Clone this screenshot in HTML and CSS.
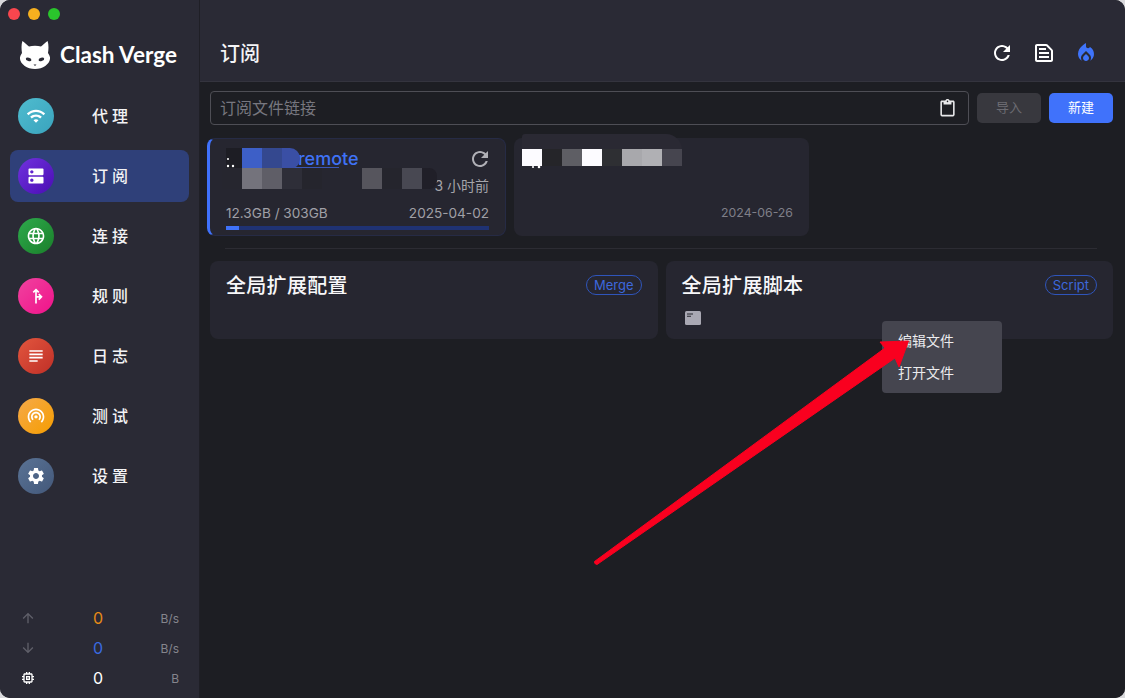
FILE: index.html
```html
<!DOCTYPE html>
<html lang="zh-CN">
<head>
<meta charset="utf-8">
<title>Clash Verge</title>
<link rel="stylesheet" href="styles.css">
</head>
<body>
<div class="window">
  <aside class="sidebar">
    <div class="traffic-lights"><i class="dot red"></i><i class="dot yellow"></i><i class="dot green"></i></div>
    <div class="logo">
      <svg class="cat" viewBox="0 0 30 28"><path fill="#fff" d="M2.4 0 C4.6 1.6 7 4 9 5.4 C12.5 4.6 17.5 4.6 21 5.4 C23 4 25.4 1.6 27.6 0 C28.8 3.5 28.6 8 28 12 C29.5 14 30.3 16 30 18 C29.5 23 23 28 15 28 C7 28 0.5 23 0 18 C-0.3 16 0.5 14 2 12 C1.4 8 1.2 3.5 2.4 0Z"/><ellipse cx="8.6" cy="18.4" rx="2.9" ry="1.6" transform="rotate(15 8.6 18.4)" fill="#2a2a35"/><ellipse cx="21.4" cy="18.4" rx="2.9" ry="1.6" transform="rotate(-15 21.4 18.4)" fill="#2a2a35"/><path fill="#2a2a35" d="M13.5 23.4 H16.5 L15 25Z"/></svg>
      <span class="logo-text">Clash Verge</span>
    </div>
    <nav class="nav">
      <a class="nav-item"><span class="nav-icon g-wifi"><svg viewBox="0 0 24 24"><path d="M1 9l2 2c4.97-4.97 13.03-4.97 18 0l2-2C16.93 2.93 7.08 2.93 1 9zm8 8l3 3 3-3c-1.65-1.66-4.34-1.66-6 0zm-4-4l2 2c2.76-2.76 7.24-2.76 10 0l2-2C15.14 9.14 8.87 9.14 5 13z"/></svg></span><span class="nav-label">代理</span></a>
      <a class="nav-item active"><span class="nav-icon g-dns"><svg viewBox="0 0 24 24"><path d="M20 13H4c-.55 0-1 .45-1 1v6c0 .55.45 1 1 1h16c.55 0 1-.45 1-1v-6c0-.55-.45-1-1-1zM7 19c-1.1 0-2-.9-2-2s.9-2 2-2 2 .9 2 2-.9 2-2 2zM20 3H4c-.55 0-1 .45-1 1v6c0 .55.45 1 1 1h16c.55 0 1-.45 1-1V4c0-.55-.45-1-1-1zM7 9c-1.1 0-2-.9-2-2s.9-2 2-2 2 .9 2 2-.9 2-2 2z"/></svg></span><span class="nav-label">订阅</span></a>
      <a class="nav-item"><span class="nav-icon g-globe"><svg viewBox="0 0 24 24"><path d="M11.99 2C6.47 2 2 6.48 2 12s4.47 10 9.99 10C17.52 22 22 17.52 22 12S17.52 2 11.99 2zm6.93 6h-2.95c-.32-1.25-.78-2.45-1.38-3.56 1.84.63 3.37 1.91 4.33 3.56zM12 4.04c.83 1.2 1.48 2.53 1.91 3.96h-3.82c.43-1.43 1.08-2.76 1.91-3.96zM4.26 14C4.1 13.36 4 12.69 4 12s.1-1.36.26-2h3.38c-.08.66-.14 1.32-.14 2 0 .68.06 1.34.14 2H4.26zm.82 2h2.95c.32 1.25.78 2.45 1.38 3.56-1.84-.63-3.37-1.9-4.33-3.56zm2.95-8H5.08c.96-1.66 2.49-2.93 4.33-3.56C8.81 5.55 8.35 6.75 8.03 8zM12 19.96c-.83-1.2-1.48-2.53-1.91-3.96h3.82c-.43 1.43-1.08 2.76-1.91 3.96zM14.34 14H9.66c-.09-.66-.16-1.32-.16-2 0-.68.07-1.35.16-2h4.68c.09.65.16 1.32.16 2 0 .68-.07 1.34-.16 2zm.25 5.56c.6-1.11 1.06-2.31 1.38-3.56h2.95c-.96 1.65-2.49 2.93-4.33 3.56zM16.36 14c.08-.66.14-1.32.14-2 0-.68-.06-1.34-.14-2h3.38c.16.64.26 1.31.26 2s-.1 1.36-.26 2h-3.38z"/></svg></span><span class="nav-label">连接</span></a>
      <a class="nav-item"><span class="nav-icon g-fork"><svg viewBox="0 0 24 24"><path d="M14.59 15.59 16 17l4-4-4-4-1.41 1.41L16.17 12H13V6.83l1.59 1.58L16 7l-4-4-4 4 1.41 1.41L11 6.83V21h2v-7h3.17l-1.58 1.59z"/></svg></span><span class="nav-label">规则</span></a>
      <a class="nav-item"><span class="nav-icon g-log"><svg viewBox="0 0 24 24"><path d="M14 17H4v2h10v-2zm6-8H4v2h16V9zM4 15h16v-2H4v2zM4 5v2h16V5H4z"/></svg></span><span class="nav-label">日志</span></a>
      <a class="nav-item"><span class="nav-icon g-test"><svg viewBox="0 0 24 24"><path d="M12 11c-1.1 0-2 .9-2 2 0 .55.23 1.05.59 1.41.36.36.86.59 1.41.59s1.05-.23 1.41-.59c.36-.36.59-.86.59-1.41 0-1.1-.9-2-2-2zm-6 2c0 1.66.68 3.15 1.76 4.24l1.42-1.42C8.45 15.1 8 14.11 8 13c0-2.21 1.79-4 4-4s4 1.79 4 4c0 1.11-.45 2.1-1.18 2.82l1.42 1.42C17.32 16.15 18 14.66 18 13c0-3.31-2.69-6-6-6s-6 2.69-6 6zm6-10C6.48 3 2 7.48 2 13c0 2.76 1.12 5.26 2.93 7.07l1.42-1.42C4.9 17.21 4 15.21 4 13c0-4.42 3.58-8 8-8s8 3.58 8 8c0 2.21-.9 4.21-2.35 5.65l1.42 1.42C20.88 18.26 22 15.76 22 13c0-5.52-4.48-10-10-10z"/></svg></span><span class="nav-label">测试</span></a>
      <a class="nav-item"><span class="nav-icon g-set"><svg viewBox="0 0 24 24"><path d="M19.14 12.94c.04-.3.06-.61.06-.94 0-.32-.02-.64-.07-.94l2.03-1.58c.18-.14.23-.41.12-.61l-1.92-3.32c-.12-.22-.37-.29-.59-.22l-2.39.96c-.5-.38-1.03-.7-1.62-.94l-.36-2.54c-.04-.24-.24-.41-.48-.41h-3.84c-.24 0-.43.17-.47.41l-.36 2.54c-.59.24-1.13.57-1.62.94l-2.39-.96c-.22-.08-.47 0-.59.22L2.74 8.87c-.12.21-.08.47.12.61l2.03 1.58c-.05.3-.09.63-.09.94s.02.64.07.94l-2.03 1.58c-.18.14-.23.41-.12.61l1.92 3.32c.12.22.37.29.59.22l2.39-.96c.5.38 1.03.7 1.62.94l.36 2.54c.05.24.24.41.48.41h3.84c.24 0 .44-.17.47-.41l.36-2.54c.59-.24 1.13-.56 1.62-.94l2.39.96c.22.08.47 0 .59-.22l1.92-3.32c.12-.22.07-.47-.12-.61l-2.01-1.58zM12 15.6c-1.98 0-3.6-1.62-3.6-3.6s1.62-3.6 3.6-3.6 3.6 1.62 3.6 3.6-1.62 3.6-3.6 3.6z"/></svg></span><span class="nav-label">设置</span></a>
    </nav>
    <div class="stats">
      <div class="stat"><svg class="stat-icon dim" viewBox="0 0 24 24"><path d="M4 12l1.41 1.41L11 7.83V20h2V7.83l5.58 5.59L20 12l-8-8-8 8z"/></svg><span class="stat-val orange">0</span><span class="stat-unit">B/s</span></div>
      <div class="stat"><svg class="stat-icon dim" viewBox="0 0 24 24"><path d="M20 12l-1.41-1.41L13 16.17V4h-2v12.17l-5.58-5.59L4 12l8 8 8-8z"/></svg><span class="stat-val blue">0</span><span class="stat-unit">B/s</span></div>
      <div class="stat"><svg class="stat-icon" viewBox="0 0 24 24"><path d="M15 9H9v6h6V9zm-2 4h-2v-2h2v2zm8-2V9h-2V7c0-1.1-.9-2-2-2h-2V3h-2v2h-2V3H9v2H7c-1.1 0-2 .9-2 2v2H3v2h2v2H3v2h2v2c0 1.1.9 2 2 2h2v2h2v-2h2v2h2v-2h2c1.1 0 2-.9 2-2v-2h2v-2h-2v-2h2zm-4 6H7V7h10v10z"/></svg><span class="stat-val">0</span><span class="stat-unit">B</span></div>
    </div>
  </aside>
  <main class="main">
    <header class="header">
      <h1 class="title">订阅</h1>
      <div class="actions">
        <svg class="act" viewBox="0 0 24 24"><path d="M17.65 6.35C16.2 4.9 14.21 4 12 4c-4.42 0-7.99 3.58-7.99 8s3.57 8 7.99 8c3.73 0 6.84-2.55 7.73-6h-2.08c-.82 2.33-3.04 4-5.65 4-3.31 0-6-2.69-6-6s2.69-6 6-6c1.66 0 3.14.69 4.22 1.78L13 11h7V4l-2.35 2.35z"/></svg>
        <svg class="act" viewBox="0 0 24 24"><path d="M14.17 5 19 9.83V19H5V5h9.17m0-2H5c-1.1 0-2 .9-2 2v14c0 1.1.9 2 2 2h14c1.1 0 2-.9 2-2V9.83c0-.53-.21-1.04-.59-1.41l-4.83-4.83c-.37-.38-.88-.59-1.41-.59zM7 15h10v2H7v-2zm0-4h10v2H7v-2zm0-4h7v2H7V7z"/></svg>
        <svg class="act fire" viewBox="0 0 24 24"><path d="M12 12.9l-2.13 2.09C9.31 15.55 9 16.28 9 17.06 9 18.68 10.35 20 12 20s3-1.32 3-2.94c0-.78-.31-1.52-.87-2.07L12 12.9z"/><path d="M16 6l-.44.55C14.38 8.02 12 7.19 12 5.3V2S4 6 4 13c0 2.92 1.56 5.47 3.89 6.86-.56-.79-.89-1.76-.89-2.8 0-1.32.52-2.56 1.47-3.5L12 10.1l3.53 3.47c.95.93 1.47 2.17 1.47 3.5 0 1.02-.31 1.96-.85 2.75 1.89-1.15 3.29-3.06 3.71-5.3.66-3.55-1.07-6.9-3.86-8.52z"/></svg>
      </div>
    </header>
    <section class="content">
      <div class="toolbar">
        <div class="url-box"><span class="url-hint">订阅文件链接</span><svg class="paste" viewBox="0 0 24 24"><path d="M19 2h-4.18C14.4.84 13.3 0 12 0c-1.3 0-2.4.84-2.82 2H5c-1.1 0-2 .9-2 2v16c0 1.1.9 2 2 2h14c1.1 0 2-.9 2-2V4c0-1.1-.9-2-2-2zm-7 0c.55 0 1 .45 1 1s-.45 1-1 1-1-.45-1-1 .45-1 1-1zm7 18H5V4h2v3h10V4h2v16z"/></svg></div>
        <button class="btn disabled">导入</button>
        <button class="btn primary">新建</button>
      </div>
      <div class="profiles">
        <article class="profile selected">
          <div class="profile-top"><span class="profile-name">remote</span><svg class="profile-refresh" viewBox="0 0 24 24"><path d="M17.65 6.35C16.2 4.9 14.21 4 12 4c-4.42 0-7.99 3.58-7.99 8s3.57 8 7.99 8c3.73 0 6.84-2.55 7.73-6h-2.08c-.82 2.33-3.04 4-5.65 4-3.31 0-6-2.69-6-6s2.69-6 6-6c1.66 0 3.14.69 4.22 1.78L13 11h7V4l-2.35 2.35z"/></svg></div>
          <div class="profile-mid">3 小时前</div>
          <div class="profile-foot"><span>12.3GB / 303GB</span><span>2025-04-02</span></div>
          <div class="bar"><div class="bar-fill"></div></div>
          <div class="name-line"></div>
          <div class="mosaic mosaic-a"><i class="c-dark"></i><i class="c-b1"></i><i class="c-b2"></i><i class="c-b3"></i></div>
          <div class="mosaic mosaic-b"><i class="c-k1"></i><i class="c-g1"></i><i class="c-g2"></i><i class="c-k2"></i><i class="c-k3"></i><i class="c-card"></i><i class="c-card"></i><i class="c-g3"></i><i class="c-k3"></i><i class="c-g4"></i><i class="c-k4"></i></div>
          <svg class="specks" viewBox="0 0 14 12"><circle cx="2" cy="2" r="1" fill="#fff"/><circle cx="2" cy="9" r="1.2" fill="#fff"/><circle cx="7" cy="9" r="1.2" fill="#fff"/></svg>
        </article>
        <article class="profile plain">
          <div class="profile-foot end"><span>2024-06-26</span></div>
          <div class="smudge"></div>
          <div class="mosaic mosaic-c"><i class="c-w"></i><i class="c-n1"></i><i class="c-n2"></i><i class="c-w"></i><i class="c-n3"></i><i class="c-n4"></i><i class="c-n5"></i><i class="c-n6"></i></div>
          <svg class="specks specks-c" viewBox="0 0 14 4"><circle cx="10" cy="2" r="1.3" fill="#fff"/><circle cx="4" cy="2" r="1.1" fill="#fff"/></svg>
        </article>
      </div>
      <div class="divider"></div>
      <div class="ext-row">
        <article class="ext">
          <div class="ext-top"><h2 class="ext-title">全局扩展配置</h2><span class="tag">Merge</span></div>
        </article>
        <article class="ext">
          <div class="ext-top"><h2 class="ext-title">全局扩展脚本</h2><span class="tag">Script</span></div>
          <svg class="ext-icon" viewBox="0 0 16 14"><rect width="16" height="14" rx="1.5" fill="#a9a8b3"/><path d="M2 3h6M2 5.2h4" stroke="#26262f" stroke-width="1.1"/></svg>
        </article>
      </div>
    </section>
  </main>
  <div class="menu"><div class="menu-item">编辑文件</div><div class="menu-item">打开文件</div></div>
  <svg class="arrow" viewBox="0 0 1125 698"><path fill="#f9001f" stroke="#f9001f" stroke-width="1" stroke-linejoin="round" d="M908.5 341 L880 342 L885 348 L594.5 561.5 Q594 564 597 564.5 L895 358 L899 367Z"/></svg>
</div>
</body>
</html>
```
FILE: styles.css
```css
* { box-sizing: border-box; }
html, body { margin: 0; height: 100%; background: #d9d9dc; overflow: hidden; }
body { font-family: Inter, "Noto Sans CJK SC", sans-serif; color: #fff; }
.window { position: relative; display: flex; width: 1125px; height: 698px; border-radius: 10px; overflow: hidden; background: #1d1e23; }

.sidebar { width: 200px; flex: none; display: flex; flex-direction: column; background: #2a2a35; border-right: 1px solid #1f1f26; }
.traffic-lights { display: flex; gap: 8px; padding: 8px 0 0 8px; height: 41px; }
.dot { width: 12px; height: 12px; border-radius: 50%; }
.red { background: #f9464e; } .yellow { background: #f6b01f; } .green { background: #2ac52c; }
.logo { display: flex; align-items: center; gap: 10px; padding-left: 20px; height: 28px; }
.cat { width: 30px; height: 28px; flex: none; }
.logo-text { font: 700 22.5px/28px Lato, sans-serif; color: #fff; white-space: nowrap; }

.nav { display: flex; flex-direction: column; gap: 8px; padding: 21px 10px 0; }
.nav-item { display: flex; align-items: center; height: 52px; padding-left: 8px; border-radius: 8px; }
.nav-item.active { background: #2f4079; }
.nav-icon { width: 36px; height: 36px; border-radius: 50%; display: flex; align-items: center; justify-content: center; flex: none; }
.nav-icon svg { width: 20px; height: 20px; fill: #fff; }
.nav-label { margin: 0 0 2px 38px; font: 500 16px/24px "Noto Sans CJK SC", sans-serif; letter-spacing: 4px; color: #f2f2f4; }
.g-wifi { background: linear-gradient(135deg, #4fbccf, #3aa3bd); }
.g-dns { background: linear-gradient(135deg, #7032de, #4a0db3); }
.g-globe { background: linear-gradient(135deg, #2eaa4c, #1a7f2a); }
.g-fork { background: linear-gradient(135deg, #f0439f, #f0128a); }
.g-log { background: linear-gradient(135deg, #e3563e, #bf2f27); }
.g-test { background: linear-gradient(135deg, #f6aa4a, #f59d00); }
.g-set { background: linear-gradient(135deg, #5a7395, #43587a); }

.stats { margin-top: auto; display: flex; flex-direction: column; padding: 0 20px 5px 20px; }
.stat { display: flex; align-items: center; height: 30px; }
.stat-icon { width: 16px; height: 16px; fill: #fff; flex: none; }
.stat-icon.dim { fill: #5f5f69; }
.stat-val { flex: 1; text-align: center; font-size: 16px; margin-left: 21px; color: #fff; }
.stat-val.orange { color: #e68a17; }
.stat-val.blue { color: #3a6ae0; }
.stat-unit { width: 40px; text-align: right; font-size: 12px; color: #85858d; }

.main { flex: 1; min-width: 0; display: flex; flex-direction: column; }
.header { height: 82px; flex: none; display: flex; align-items: center; justify-content: space-between; padding: 25px 27px 0 20px; background: #2a2a35; border-bottom: 1px solid #34343e; }
.title { margin: 0; font: 500 20px/28px "Noto Sans CJK SC", sans-serif; color: #f4f4f6; }
.actions { display: flex; gap: 18px; }
.act { width: 24px; height: 24px; fill: #fff; }
.act.fire { fill: #3f74fb; }

.content { position: relative; flex: 1; padding: 9px 12px 0 10px; background: #1d1e23; }
.toolbar { display: flex; align-items: center; gap: 8px; height: 34px; }
.url-box { flex: 1; height: 34px; display: flex; align-items: center; justify-content: space-between; padding: 0 11px 0 9px; border: 1px solid #4e4e55; border-radius: 4px; }
.url-hint { font: 400 16px/24px "Noto Sans CJK SC", sans-serif; color: #77777f; padding-bottom: 2px; }
.paste { width: 19px; height: 19px; fill: #e8e8ea; }
.btn { width: 64px; height: 30px; border: 0; border-radius: 5px; font: 400 13px/20px "Noto Sans CJK SC", sans-serif; padding: 0 0 2px; }
.btn.disabled { background: #38383e; color: #6c6c72; }
.btn.primary { background: #4072fb; color: #fff; }

.profiles { display: flex; gap: 8px; margin: 13px 0 0 -3px; }
.profile { position: relative; height: 98px; border-radius: 8px; background: #262630; display: flex; flex-direction: column; }
.profile.selected { width: 299px; padding: 6px 16px 0 16px; border-left: 3px solid #4072fb; border-right: 1px solid #262b45; border-top: 1px solid #262b45; border-bottom: 1px solid #262b45; }
.profile.plain { width: 295px; padding: 0 16px; justify-content: flex-end; }
.profile-top { display: flex; justify-content: space-between; align-items: center; height: 28px; padding-left: 72px; }
.profile-name { font: 500 18px/22px Inter, sans-serif; color: #3f72f5; }
.profile-refresh { width: 24px; height: 24px; fill: #b0b0b6; margin-right: -3px; }
.profile-mid { text-align: right; font: 400 14px/18px Inter, "Noto Sans CJK SC", sans-serif; color: #a4a4aa; margin-top: 4px; }
.profile-foot { display: flex; justify-content: space-between; font: 400 13.6px/18px Inter, sans-serif; color: #a0a0a7; margin-top: 9px; }
.profile-foot.end { justify-content: flex-end; font-size: 12.3px; color: #7f7f88; margin: 0 0 14px; }
.bar { height: 4px; margin-top: 4px; background: #1f3273; overflow: hidden; }
.bar-fill { width: 5%; height: 100%; background: #3f72f9; }
.name-line { position: absolute; left: 45px; top: 28px; width: 84px; height: 1px; background: #3a57b8; }

.mosaic { position: absolute; display: flex; }
.mosaic i { width: 20px; height: 100%; display: block; flex: none; }
.mosaic-a { left: 16px; top: 9px; height: 21px; }
.mosaic-a i:first-child { width: 16px; }
.mosaic-a i:last-child { width: 18px; border-radius: 0 10px 10px 0; }
.mosaic-b { left: 12px; top: 29px; height: 21px; }
.mosaic-b i:last-child { width: 15px; border-radius: 0 8px 8px 0; }
.mosaic-c { left: 8px; top: 11px; height: 17px; }
.specks { position: absolute; left: 16px; top: 18px; width: 14px; height: 12px; }
.specks-c { left: 15px; top: 27px; height: 4px; }
.c-dark { background: #1d1d24; } .c-b1 { background: #3d5fc7; } .c-b2 { background: #34488f; } .c-b3 { background: #3a4fa5; }
.c-k1 { background: #26262f; } .c-g1 { background: #74737c; } .c-g2 { background: #5f5e67; } .c-k2 { background: #2e2e38; } .c-k3 { background: #25252d; }
.c-card { background: #262630; } .c-g3 { background: #56555d; } .c-g4 { background: #484852; } .c-k4 { background: #201f28; }
.c-w { background: #fcfbff; } .c-n1 { background: #252529; } .c-n2 { background: #5e5e64; } .c-n3 { background: #2e2f33; } .c-n4 { background: #a8a8ac; } .c-n5 { background: #b0b0b4; } .c-n6 { background: #46454f; }
.smudge { position: absolute; left: 8px; top: -4px; width: 160px; height: 16px; background: #2a2933; border-radius: 6px 30px 0 0; }

.divider { height: 1px; margin: 12px 16px 0 15px; background: #2c2c33; }
.ext-row { display: flex; gap: 8px; margin-top: 12px; }
.ext { flex: 1; height: 78px; border-radius: 8px; background: #262630; padding: 8px 16px; }
.ext-top { display: flex; justify-content: space-between; align-items: flex-start; }
.ext-title { margin: 0; font: 500 20px/32px "Noto Sans CJK SC", sans-serif; letter-spacing: .3px; color: #f7f7f9; }
.tag { margin-top: 6px; height: 20px; padding: 0 7px; border: 1px solid #2f55bb; border-radius: 10px; font: 400 13px/18px Inter, sans-serif; color: #3d68dc; }
.ext-icon { display: block; width: 16px; height: 14px; margin: 10px 0 0 3px; }

.menu { position: absolute; left: 882px; top: 321px; width: 120px; height: 72px; padding: 4px 0; border-radius: 4px; background: #45454f; }
.menu-item { height: 32px; padding: 0 16px; font: 400 14px/30px "Noto Sans CJK SC", sans-serif; color: #ececee; }
.arrow { position: absolute; left: 0; top: 0; width: 1125px; height: 698px; pointer-events: none; }
```
